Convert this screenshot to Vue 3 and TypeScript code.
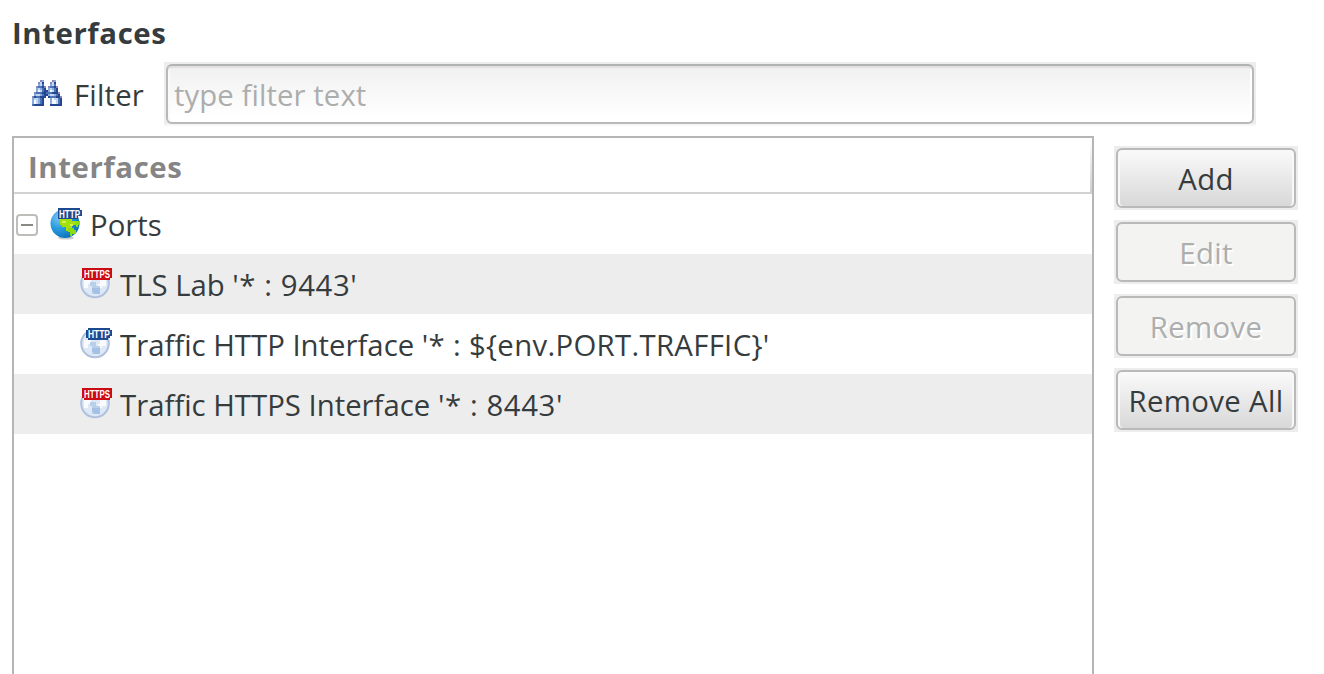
<script setup lang="ts">
interface PortRow {
  name: string
  address: string
  secure: boolean
}

interface ActionButton {
  label: string
  enabled: boolean
}

interface Cell {
  x: number
  y: number
  fill: string
}

const rows: PortRow[] = [
  { name: 'TLS Lab', address: "'* : 9443'", secure: true },
  { name: 'Traffic HTTP Interface', address: "'* : ${env.PORT.TRAFFIC}'", secure: false },
  { name: 'Traffic HTTPS Interface', address: "'* : 8443'", secure: true },
]

const actions: ActionButton[] = [
  { label: 'Add', enabled: true },
  { label: 'Edit', enabled: false },
  { label: 'Remove', enabled: false },
  { label: 'Remove All', enabled: true },
]

const palette: Record<string, string> = {
  D: '#26478f',
  M: '#4a74b8',
  P: '#8d86bd',
  B: '#88acdb',
  L: '#c3d6ee',
  W: '#f6faff',
}

// Each character is one 2x2 block of the icon.
const pattern = [
  '....PB....PB...',
  '...PLD...PLD...',
  '...BLM...BLM...',
  '..PMMDP.PMMDP..',
  '..BLBMD.BLBMD..',
  '..BWLMDDBWLMD..',
  '.PMMMDDMMMDDDP.',
  '.BLLBMDDBLLBMD.',
  'PDMMDDD.DMMMDDP',
  'BLLBMD...BWLLMD',
  'BWLBMD...BWWLMD',
  'BWLBMD...BWWLMD',
  'MDDDDD...DDDDDD',
]

const cells: Cell[] = pattern.flatMap((line, y) =>
  [...line].flatMap((c, x) => (c === '.' ? [] : [{ x, y, fill: palette[c] }])),
)
</script>

<template>
  <main class="page">
    <h1 class="title">Interfaces</h1>
    <div class="filter">
      <svg class="binoculars" viewBox="0 0 15 13" shape-rendering="crispEdges">
        <rect v-for="c in cells" :key="`${c.x}-${c.y}`" :x="c.x" :y="c.y" width="1" height="1" :fill="c.fill" />
      </svg>
      <label class="filter-label" for="filter">Filter</label>
      <div class="field-frame">
        <input id="filter" class="field" type="text" placeholder="type filter text" />
      </div>
    </div>
    <div class="content">
      <section class="tree">
        <header class="tree-head">Interfaces</header>
        <div class="row root">
          <span class="toggle"></span>
          <svg class="icon" viewBox="0 0 32 32">
            <defs>
              <radialGradient id="sea" cx=".3" cy=".3" r=".75">
                <stop offset="0" stop-color="#7cc6f2" />
                <stop offset=".5" stop-color="#2b9be0" />
                <stop offset="1" stop-color="#0c72b8" />
              </radialGradient>
            </defs>
            <ellipse cx="16" cy="30" rx="8" ry="1.6" fill="#c9cdd0" />
            <circle cx="15" cy="15.500" r="14.500" fill="url(#sea)" />
            <path d="M10 11h12v2h4v4h-4v4h-4v2h-2v-4h-4v-2h-2z" fill="#a2e010" />
            <path d="M26 13h4v4h-2v2h-2zM18 20h6v2h2v4h-4v2h-2v-4h-2z" fill="#8cdc12" />
            <path d="M12 13h4v2h-4zM20 16h3v2h-3z" fill="#d9ee55" />
            <path d="M8 0h22v2h2v6h-4v3H8z" fill="#1d4a8f" />
            <text x="9" y="10" class="badge" textLength="21" lengthAdjust="spacingAndGlyphs">HTTP</text>
          </svg>
          <span class="text">Ports</span>
        </div>
        <div v-for="row in rows" :key="row.name" class="row child" :class="{ shaded: row.secure }">
          <svg class="icon" viewBox="0 0 32 32">
            <circle cx="15" cy="15.500" r="13.800" fill="#dfe9f5" stroke="#afc1df" stroke-width="2" />
            <path d="M4 12h7v4H8v4H4zM20 12h6v6h-4v2h-4v-4h2z" fill="#f8fafc" />
            <path d="M10 14h6v4h4v8h-8v-2h4v-4h-4v-2h-2z" fill="#b9cfea" />
            <path d="M12 20h8v6h-6v-2h-2z" fill="#a4c0e4" />
            <template v-if="row.secure">
              <path d="M2 0h30v10h-2v2H4v-2H2z" fill="#cc0a12" />
              <text x="4" y="10" class="badge" textLength="26" lengthAdjust="spacingAndGlyphs">HTTPS</text>
            </template>
            <template v-else>
              <path d="M8 0h22v2h2v6h-2v2h-2v2H8v-2H6V2h2z" fill="#1d4a8f" />
              <text x="8" y="10" class="badge" textLength="22" lengthAdjust="spacingAndGlyphs">HTTP</text>
            </template>
          </svg>
          <span class="text">{{ row.name }} <span class="address">{{ row.address }}</span></span>
        </div>
      </section>
      <aside class="actions">
        <div v-for="a in actions" :key="a.label" class="button-frame">
          <button class="button" type="button" :disabled="!a.enabled">{{ a.label }}</button>
        </div>
      </aside>
    </div>
  </main>
</template>

<style>
body {
  margin: 0;
  background: #fff;
  overflow: hidden;
}
</style>

<style scoped>
.page {
  box-sizing: border-box;
  height: 674px;
  padding: 13px 26px 0 12px;
  display: flex;
  flex-direction: column;
  overflow: hidden;
  font-family: 'Open Sans', 'Noto Sans', sans-serif;
  font-size: 29.33px;
  line-height: 40px;
  color: #363c3e;
}
.title {
  margin: 0;
  font-size: inherit;
  font-weight: 700;
  letter-spacing: 0.6px;
}
.filter {
  display: flex;
  align-items: center;
  height: 64px;
  margin-top: 9px;
  padding-left: 20px;
}
.binoculars {
  width: 30px;
  height: 26px;
  margin-bottom: 2px;
}
.filter-label {
  width: 90px;
  margin-left: 12px;
  padding-top: 1px;
  letter-spacing: 0.2px;
}
.field-frame {
  box-sizing: border-box;
  width: 1092px;
  height: 64px;
  padding: 2px;
  background: linear-gradient(#ededed 62px, #f6f6f6 62px);
}
.field {
  box-sizing: border-box;
  display: block;
  width: 100%;
  height: 60px;
  margin: 0;
  padding: 2px 6px 0;
  border: 2px solid #b7bab9;
  border-top-color: #afb3b2;
  border-radius: 6px;
  background: linear-gradient(#f0f0f0, #fff 90%);
  box-shadow: inset 0 2px #e5dfdf, inset 2px 0 #fafafa, inset -2px 0 #fff;
  font: inherit;
  letter-spacing: 0.08px;
  color: #363c3e;
  outline: none;
}
.field::placeholder {
  color: #adadad;
  opacity: 1;
}
.content {
  display: flex;
  flex: 1;
  margin-top: 10px;
}
.tree {
  box-sizing: border-box;
  width: 1082px;
  height: 560px;
  border: 2px solid #b3b6b5;
}
.tree-head {
  box-sizing: border-box;
  height: 56px;
  padding: 9px 0 0 14px;
  border-bottom: 2px solid #d2d2d2;
  background: linear-gradient(#fff, #cfcfcf) right / 2px 100% no-repeat;
  font-weight: 700;
  letter-spacing: 0.6px;
  color: #858585;
}
.row {
  display: flex;
  align-items: center;
  height: 60px;
  white-space: pre;
}
.text {
  padding-top: 1px;
}
.address {
  letter-spacing: 0.32px;
}
.shaded .address {
  letter-spacing: 0.6px;
}
.root {
  padding-left: 2px;
}
.child {
  padding-left: 66px;
}
.shaded {
  background: #ededed;
}
.toggle {
  box-sizing: border-box;
  display: flex;
  align-items: center;
  justify-content: center;
  width: 22px;
  height: 22px;
  margin: 2px 12px 0 0;
  border: 2px solid #bdbeb9;
  border-radius: 4px;
}
.toggle::before {
  content: '';
  width: 12px;
  height: 2px;
  background: #8a8883;
}
.icon {
  width: 32px;
  height: 32px;
  margin-right: 8px;
  overflow: visible;
}
.badge {
  font-family: 'Liberation Sans', sans-serif;
  font-size: 10.5px;
  font-weight: 700;
  fill: #fff;
}
.actions {
  display: flex;
  flex-direction: column;
  gap: 10px;
  margin: 10px 0 0 20px;
}
.button-frame {
  box-sizing: border-box;
  width: 184px;
  height: 64px;
  padding: 2px;
  background: #ededed;
}
.button {
  box-sizing: border-box;
  display: block;
  width: 180px;
  height: 60px;
  margin: 0;
  padding: 2px 0 0;
  border: 2px solid #b7bab9;
  border-radius: 6px;
  background: linear-gradient(#fafafa, #d8d8d8);
  box-shadow: inset 2px 0 #f8f8f8, inset -2px 0 #f8f8f8;
  font: inherit;
  line-height: 40px;
  letter-spacing: 0.35px;
  color: #363c3e;
  white-space: nowrap;
}
.button:disabled {
  background: #f3f3f2;
  box-shadow: none;
  color: #adaeae;
  text-shadow: 2px 2px #fff;
}
</style>
